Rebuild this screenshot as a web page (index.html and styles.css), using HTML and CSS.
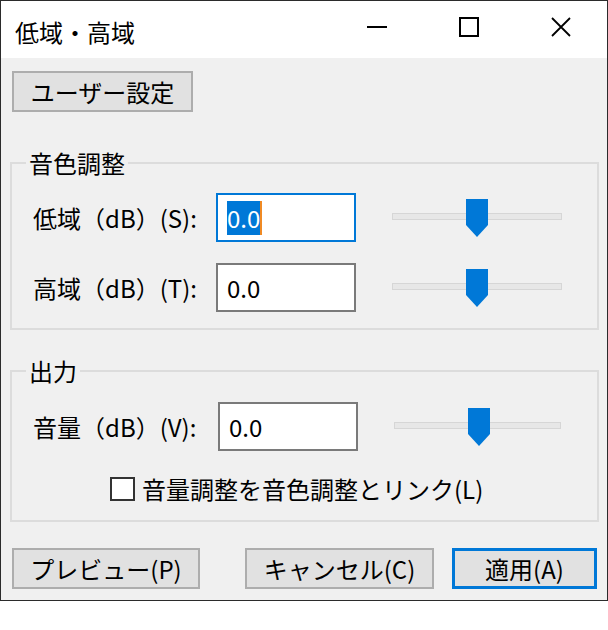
FILE: index.html
```html
<!DOCTYPE html>
<html>
<head>
    <meta charset="utf-8">
    <link rel="stylesheet" href="styles.css">
</head>

<body>
    <div class="window">
        <div class="titlebar">
            <span class="title">低域・高域</span>
            <span class="caption-btn">
                <svg width="20" height="20" viewBox="0 0 20 20"><line x1="0" y1="10" x2="20" y2="10" stroke="#000" stroke-width="2"/></svg>
            </span>
            <span class="caption-btn">
                <svg width="20" height="20" viewBox="0 0 20 20"><rect x="1" y="1" width="18" height="18" fill="none" stroke="#000" stroke-width="2"/></svg>
            </span>
            <span class="caption-btn">
                <svg width="20" height="20" viewBox="0 0 20 20"><path d="M1 1 L19 19 M19 1 L1 19" stroke="#000" stroke-width="1.8" fill="none"/></svg>
            </span>
        </div>

        <div class="client">
            <button type="button" class="btn btn-user">ユーザー設定</button>

            <fieldset class="group">
                <legend>音色調整</legend>
                <div class="group-body tone">
                    <div class="row">
                        <span class="row-label">低域（dB）(S):</span>
                        <div class="field focused"><span class="sel">0.0</span><span class="caret"></span></div>
                        <div class="slider">
                            <div class="track"></div>
                            <svg class="thumb" width="22" height="38" viewBox="0 0 22 38"><polygon points="0,0 22,0 22,26 11,38 0,26" fill="#0078d7"/></svg>
                        </div>
                    </div>
                    <div class="row">
                        <span class="row-label">高域（dB）(T):</span>
                        <div class="field">0.0</div>
                        <div class="slider">
                            <div class="track"></div>
                            <svg class="thumb" width="22" height="38" viewBox="0 0 22 38"><polygon points="0,0 22,0 22,26 11,38 0,26" fill="#0078d7"/></svg>
                        </div>
                    </div>
                </div>
            </fieldset>

            <fieldset class="group group-output">
                <legend>出力</legend>
                <div class="group-body output">
                    <div class="row">
                        <span class="row-label">音量（dB）(V):</span>
                        <div class="field">0.0</div>
                        <div class="slider">
                            <div class="track"></div>
                            <svg class="thumb" width="22" height="38" viewBox="0 0 22 38"><polygon points="0,0 22,0 22,26 11,38 0,26" fill="#0078d7"/></svg>
                        </div>
                    </div>
                    <label class="check"><span class="box"></span>音量調整を音色調整とリンク(L)</label>
                </div>
            </fieldset>

            <div class="footer">
                <button type="button" class="btn btn-preview">プレビュー(P)</button>
                <button type="button" class="btn btn-cancel">キャンセル(C)</button>
                <button type="button" class="btn btn-apply">適用(A)</button>
            </div>
        </div>
    </div>
</body>
</html>
```

FILE: styles.css
```css
body {
    margin: 0;
    background: #fff;
    font-family: "Noto Sans CJK JP", "Noto Sans", sans-serif;
    font-size: 24px;
    color: #000;
}

.window {
    width: 608px;
    box-sizing: border-box;
    border: 1px solid #2b2b2b;
    background: #f0f0f0;
}

.titlebar {
    display: flex;
    height: 57px;
    background: #fff;
}

.title {
    flex: 1;
    padding: 19px 0 0 14px;
    line-height: 24px;
}

.caption-btn {
    width: 92px;
    display: flex;
    justify-content: center;
    align-items: flex-start;
    padding-top: 16px;
    box-sizing: border-box;
}

.client {
    padding: 13px 8px 11px 9px;
}

.btn {
    font: inherit;
    color: #000;
    background: #e1e1e1;
    border: 2px solid #adadad;
    height: 41px;
    padding: 0;
    line-height: 1;
}

.btn-user {
    display: block;
    width: 181px;
    margin-left: 2px;
}

.group {
    margin: 39px 0 0;
    padding: 0;
    border: 2px solid #dcdcdc;
    min-inline-size: 0;
}

.group-output {
    margin-top: 29px;
}

.group legend {
    margin-left: 14px;
    padding: 0 3px;
    line-height: 24px;
}

.group-body {
    padding: 18px 0 16px 21px;
}

.group-body.output {
    padding: 19px 0 19px 21px;
}

.row {
    display: grid;
    grid-template-columns: 183px 140px 206px;
    align-items: center;
}

.output .row {
    grid-template-columns: 185px 140px 203px;
}

.row + .row {
    margin-top: 21px;
}

.row-label {
    white-space: nowrap;
    line-height: 24px;
}

.field {
    height: 49px;
    box-sizing: border-box;
    border: 2px solid #7a7a7a;
    background: #fff;
    padding: 0 9px;
    display: flex;
    align-items: center;
    line-height: 34px;
}

.field.focused {
    border-color: #0078d7;
}

.sel {
    background: #0078d7;
    color: #fff;
    line-height: 34px;
}

.caret {
    width: 2px;
    height: 34px;
    background: #f08a24;
}

.slider {
    position: relative;
    height: 49px;
    margin-left: 36px;
    display: flex;
    align-items: center;
}

.track {
    width: 100%;
    height: 5px;
    margin-top: -2px;
    border: 1px solid #d6d6d6;
    background: #e7e7e7;
}

.thumb {
    position: absolute;
    left: 74px;
    top: 6px;
}

.check {
    display: flex;
    align-items: center;
    gap: 7px;
    height: 24px;
    margin: 26px 0 0 77px;
    line-height: 24px;
}

.box {
    width: 25px;
    height: 24px;
    box-sizing: border-box;
    border: 2px solid #333;
    background: #fff;
}

.footer {
    display: flex;
    margin-top: 26px;
    padding: 0 2px;
}

.btn-preview {
    width: 188px;
}

.btn-cancel {
    width: 189px;
    margin-left: auto;
}

.btn-apply {
    width: 145px;
    margin-left: 18px;
    border: 3px solid #0078d7;
}
```
